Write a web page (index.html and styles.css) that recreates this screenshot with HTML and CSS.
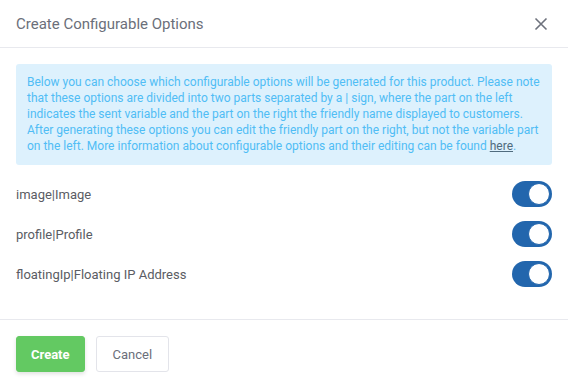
FILE: index.html
```html
<!DOCTYPE html>
<html lang="en">
<head>
  <meta charset="UTF-8">
  <title>Create Configurable Options</title>
  <link rel="stylesheet" href="styles.css">
</head>
<body>
  <div class="modal">
    <div class="modal-header">
      <h3 class="modal-title">Create Configurable Options</h3>
      <button class="close" type="button">
        <svg width="14" height="14" viewBox="0 0 14 14"><path d="M1.5 1.5L12.5 12.5M12.5 1.5L1.5 12.5" stroke="#6d717c" stroke-width="1.6" fill="none"/></svg>
      </button>
    </div>
    <div class="modal-body">
      <div class="alert">
        Below you can choose which configurable options will be generated for this product. Please note that these options are divided into two parts separated by a | sign, where the part on the left indicates the sent variable and the part on the right the friendly name displayed to customers. After generating these options you can edit the friendly part on the right, but not the variable part on the left. More information about configurable options and their editing can be found <a href="#">here</a>.
      </div>
      <div class="option">
        <span>image|Image</span>
        <label class="switch"><input type="checkbox" checked><span class="slider"></span></label>
      </div>
      <div class="option">
        <span>profile|Profile</span>
        <label class="switch"><input type="checkbox" checked><span class="slider"></span></label>
      </div>
      <div class="option">
        <span>floatingIp|Floating IP Address</span>
        <label class="switch"><input type="checkbox" checked><span class="slider"></span></label>
      </div>
    </div>
    <div class="modal-footer">
      <button class="btn btn-success">Create</button>
      <button class="btn btn-default">Cancel</button>
    </div>
  </div>
</body>
</html>
```

FILE: styles.css
```css
body {
  margin: 0;
  background: #fff;
  font-family: Roboto, "Noto Sans", sans-serif;
}

.modal {
  width: 568px;
  height: 384px;
}

.modal-header {
  display: flex;
  justify-content: space-between;
  align-items: center;
  height: 47px;
  padding: 0 16px;
  border-bottom: 1px solid #e8e9ee;
}

.modal-title {
  margin: 0;
  font-size: 15px;
  font-weight: 400;
  color: #6b6f7a;
}

.close {
  border: none;
  background: none;
  padding: 0;
  margin-right: 4px;
  display: flex;
  cursor: pointer;
}

.modal-body {
  padding: 16px 16px 4px;
  height: 272px;
  box-sizing: border-box;
  border-bottom: 1px solid #e8e9ee;
}

.alert {
  background: #ddf1fd;
  color: #50bdf5;
  font-size: 12px;
  line-height: 16px;
  padding: 10px 11px 11px;
  border-radius: 3px;
}

.alert a {
  color: #4f6b7e;
  text-decoration: underline;
}

.option {
  display: flex;
  justify-content: space-between;
  align-items: center;
  height: 40px;
  font-size: 13px;
  color: #5a5c63;
}

.alert + .option {
  margin-top: 9px;
}

.switch {
  position: relative;
  width: 40px;
  height: 26px;
}

.switch input {
  display: none;
}

.slider {
  position: absolute;
  inset: 0;
  background: #2266ad;
  border-radius: 13px;
  cursor: pointer;
}

.slider::before {
  content: "";
  position: absolute;
  top: 2px;
  right: 2px;
  width: 20px;
  height: 20px;
  background: #fff;
  border: 1px solid #2266ad;
  border-radius: 50%;
}

.modal-footer {
  display: flex;
  gap: 11px;
  padding: 16px;
}

.btn {
  font-family: inherit;
  font-size: 13px;
  height: 36px;
  border-radius: 3px;
  cursor: pointer;
}

.btn-success {
  background: #63c962;
  border: 1px solid #63c962;
  color: #fff;
  font-weight: 700;
  padding: 0 14px;
  box-shadow: 0 2px 4px rgba(0, 0, 0, 0.12);
}

.btn-default {
  background: #fff;
  border: 1px solid #e3e4ea;
  color: #6b6f7a;
  padding: 0 16px;
  min-width: 71px;
}
```
